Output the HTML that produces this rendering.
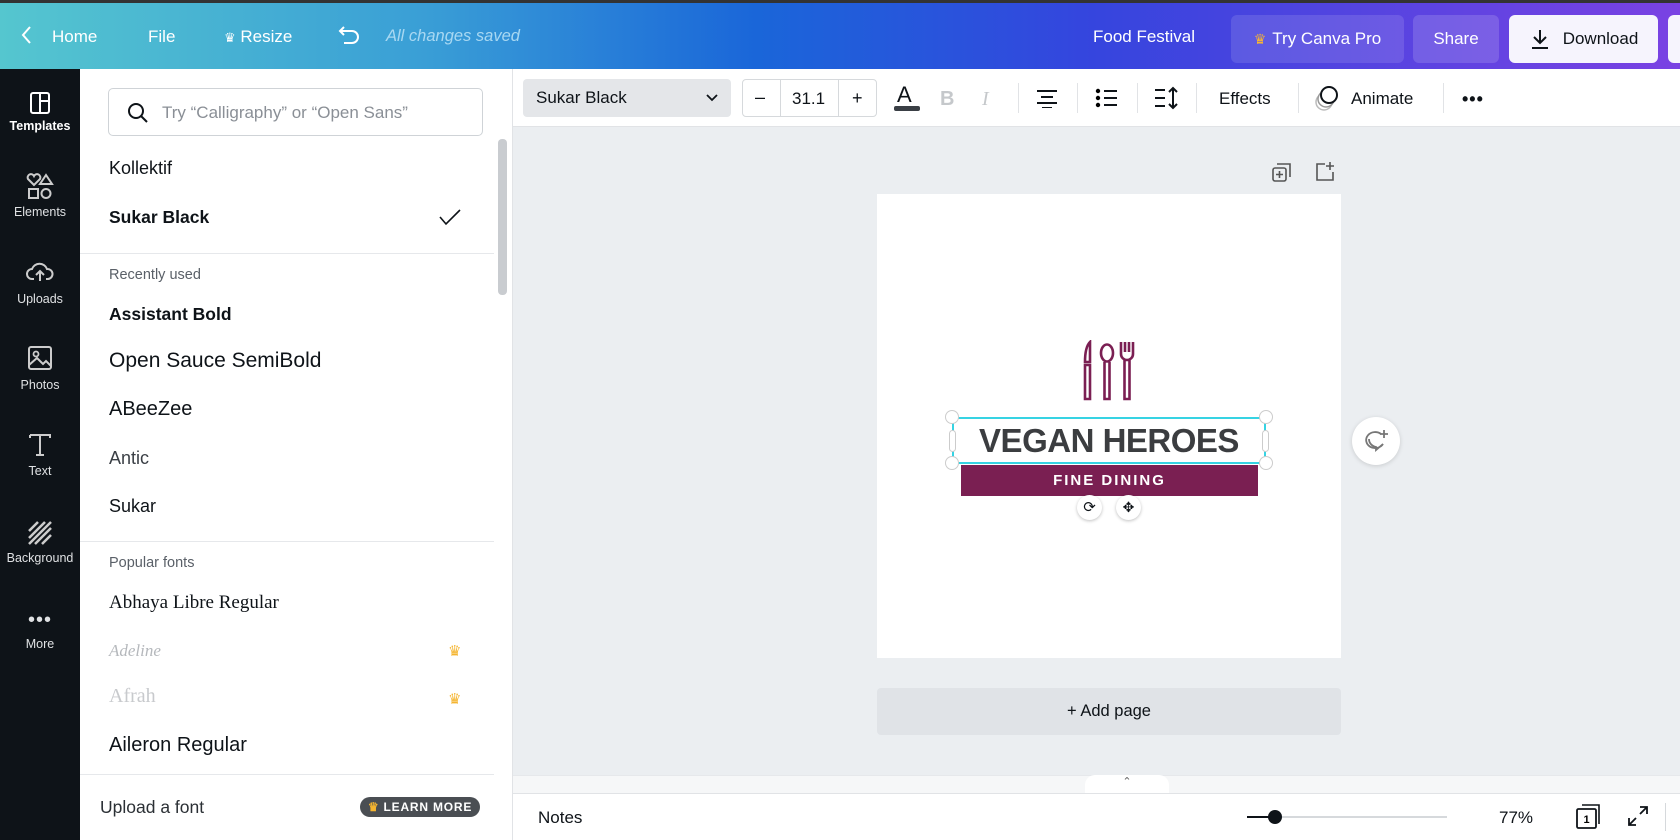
<!DOCTYPE html>
<html><head><meta charset="utf-8"><style>
*{margin:0;padding:0;box-sizing:border-box}
body{width:1680px;height:840px;overflow:hidden;position:relative;font-family:"Liberation Sans",sans-serif;background:#ebeef1;color:#0e1318}
.a{position:absolute}
.hdr{left:0;top:0;width:1680px;height:69px;background:linear-gradient(90deg,#55c6cf 0%,#3a9fd6 25%,#1a66d9 45%,#3545de 65%,#7a42e3 100%);border-top:3px solid #333}
.hdr .t{color:#fff;font-size:17px;top:24px}
.side{left:0;top:69px;width:80px;height:771px;background:#0e1318}
.side .l{width:80px;text-align:center;color:#dfe1e3;font-size:12.5px;left:0}
.side svg{position:absolute;left:26px}
.panel{left:80px;top:69px;width:433px;height:771px;background:#fff;border-right:1px solid #e1e3e6}
.fi{left:109px;font-size:18px;color:#0e1318}
.sep{left:80px;width:414px;height:1px;background:#e6e8eb}
.tb{left:513px;top:69px;width:1167px;height:58px;background:#fff;border-bottom:1px solid #e1e3e6}
.vs{width:1px;height:30px;background:#e1e3e6;top:83px}
.btn{border-radius:6px;height:48px;top:12px;font-size:17px;color:#fff;display:flex;align-items:center;justify-content:center}
</style></head><body>
<div class="a hdr">
 <svg class="a" style="left:20px;top:22px" width="14" height="20"><path d="M10 2 L3 10 L10 18" stroke="#fff" stroke-width="2" fill="none"/></svg>
 <div class="a t" style="left:52px">Home</div>
 <div class="a t" style="left:148px">File</div>
 <div class="a t" style="left:224px"><span style="font-size:13px">♛</span> Resize</div>
 <svg class="a" style="left:338px;top:20px" width="24" height="22"><path d="M6 4 L2 8 L6 12 M2 8 H14 a6 6 0 0 1 0 12 H6" stroke="#fff" stroke-width="2" fill="none"/></svg>
 <div class="a t" style="left:386px;font-style:italic;color:#a8d8f2;font-size:16.5px">All changes saved</div>
 <div class="a t" style="left:1093px">Food Festival</div>
 <div class="a btn" style="left:1231px;width:173px;background:rgba(255,255,255,.12)"><span style="color:#f8b533;font-size:14px;margin-right:6px">♛</span>Try Canva Pro</div>
 <div class="a btn" style="left:1413px;width:86px;background:rgba(255,255,255,.15)">Share</div>
 <div class="a btn" style="left:1509px;width:149px;background:#f6f4fd;color:#0e1318"><svg width="22" height="22" style="margin-right:12px"><path d="M11 2 V15 M5 9 L11 15 L17 9 M3 20 H19" stroke="#0e1318" stroke-width="2" fill="none"/></svg>Download</div>
 <div class="a btn" style="left:1668px;width:20px;background:#f6f4fd"></div>
</div>
<div class="a side">
 <svg style="top:22px" width="28" height="26"><rect x="5" y="2" width="18" height="20" rx="2" stroke="#fff" stroke-width="2" fill="none"/><path d="M14 2V22 M14 10H23" stroke="#fff" stroke-width="2"/></svg>
 <div class="a l" style="top:50px;color:#fff;font-weight:bold">Templates</div>
 <svg style="top:104px" width="28" height="28"><path d="M8 12 L2 6 a3 3 0 0 1 6-3 a3 3 0 0 1 6 3z" stroke="#ccc" stroke-width="2" fill="none"/><path d="M20 2 L26 11 H14z" stroke="#ccc" stroke-width="2" fill="none"/><rect x="3" y="16" width="9" height="9" stroke="#ccc" stroke-width="2" fill="none"/><circle cx="20" cy="20.5" r="4.5" stroke="#ccc" stroke-width="2" fill="none"/></svg>
 <div class="a l" style="top:136px">Elements</div>
 <svg style="top:190px" width="28" height="26"><path d="M8 20 H6 a5 5 0 0 1 0-10 a8 8 0 0 1 15 0 a5 5 0 0 1 1 10 H20 M14 22 V12 M10 16 L14 12 L18 16" stroke="#ccc" stroke-width="2" fill="none"/></svg>
 <div class="a l" style="top:223px">Uploads</div>
 <svg style="top:276px" width="28" height="26"><rect x="3" y="2" width="22" height="22" rx="2" stroke="#ccc" stroke-width="2" fill="none"/><circle cx="10" cy="9" r="2.5" stroke="#ccc" stroke-width="1.8" fill="none"/><path d="M3 20 L11 13 L17 19 L20 16 L25 21" stroke="#ccc" stroke-width="2" fill="none"/></svg>
 <div class="a l" style="top:309px">Photos</div>
 <svg style="top:364px" width="28" height="24"><path d="M4 2 V5 M4 2 H24 V5 M14 2 V22 M10 22 H18" stroke="#ccc" stroke-width="2" fill="none"/></svg>
 <div class="a l" style="top:395px">Text</div>
 <svg style="top:450px" width="28" height="26"><path d="M3 12 L12 3 M3 19 L19 3 M3 25 L25 3 M9 25 L25 9 M16 25 L25 16" stroke="#ccc" stroke-width="2.5"/></svg>
 <div class="a l" style="top:482px">Background</div>
 <div class="a l" style="top:540px;font-size:20px;letter-spacing:1px">•••</div>
 <div class="a l" style="top:568px">More</div>
</div>
<div class="a panel"></div>
<div class="a" style="left:108px;top:88px;width:375px;height:48px;border:1px solid #cfd3d7;border-radius:5px;background:#fff"></div>
<svg class="a" style="left:126px;top:101px" width="24" height="24"><circle cx="10" cy="10" r="7" stroke="#0e1318" stroke-width="2" fill="none"/><path d="M15 15 L21 21" stroke="#0e1318" stroke-width="2"/></svg>
<div class="a" style="left:162px;top:103px;font-size:17px;color:#8a8f96">Try “Calligraphy” or “Open Sans”</div>
<div class="a" style="left:498px;top:139px;width:9px;height:156px;background:#c9ccd0;border-radius:4px"></div>
<div class="a fi" style="top:158px">Kollektif</div>
<div class="a fi" style="top:207px;font-weight:bold;font-size:17.5px">Sukar Black</div>
<svg class="a" style="left:438px;top:207px" width="24" height="20"><path d="M2 10 L8 17 L22 3" stroke="#0e1318" stroke-width="1.6" fill="none"/></svg>
<div class="a sep" style="top:253px"></div>
<div class="a" style="left:109px;top:267px;font-size:14.5px;color:#5a6068">Recently used</div>
<div class="a fi" style="top:304px;font-weight:bold;font-size:17.5px">Assistant Bold</div>
<div class="a fi" style="top:349px;font-size:21px">Open Sauce SemiBold</div>
<div class="a fi" style="top:398px;font-size:20px">ABeeZee</div>
<div class="a fi" style="top:448px;color:#3a3f45">Antic</div>
<div class="a fi" style="top:496px">Sukar</div>
<div class="a sep" style="top:541px"></div>
<div class="a" style="left:109px;top:555px;font-size:14.5px;color:#5a6068">Popular fonts</div>
<div class="a fi" style="top:592px;font-family:'Liberation Serif',serif;font-size:19px">Abhaya Libre Regular</div>
<div class="a fi" style="top:641px;font-family:'Liberation Serif',serif;font-style:italic;font-size:17px;color:#b5b8bc">Adeline</div>
<div class="a fi" style="top:685px;font-family:'Liberation Serif',serif;font-size:20px;color:#c8cacd">Afrah</div>
<div class="a" style="left:448px;top:642px;color:#f5b530;font-size:15px">♛</div>
<div class="a" style="left:448px;top:690px;color:#f5b530;font-size:15px">♛</div>
<div class="a fi" style="top:734px;font-size:20px">Aileron Regular</div>
<div class="a sep" style="top:774px"></div>
<div class="a" style="left:100px;top:797px;font-size:17.5px;color:#2b3035">Upload a font</div>
<div class="a" style="left:360px;top:797px;width:120px;height:20px;background:#4a4e53;border-radius:10px;color:#fff;font-size:12px;font-weight:bold;letter-spacing:.8px;line-height:20px;text-align:center"><span style="color:#f5b530">♛</span> LEARN MORE</div>

<div class="a tb"></div>
<div class="a" style="left:523px;top:79px;width:208px;height:38px;background:#e4e6e9;border-radius:4px;font-size:17px;padding:9px 0 0 13px">Sukar Black</div>
<svg class="a" style="left:705px;top:93px" width="14" height="10"><path d="M2 2 L7 7 L12 2" stroke="#0e1318" stroke-width="1.8" fill="none"/></svg>
<div class="a" style="left:742px;top:79px;width:135px;height:38px;border:1px solid #d6d9dc;border-radius:4px"></div>
<div class="a" style="left:780px;top:79px;width:1px;height:38px;background:#d6d9dc"></div>
<div class="a" style="left:838px;top:79px;width:1px;height:38px;background:#d6d9dc"></div>
<div class="a" style="left:755px;top:87px;font-size:18px">–</div>
<div class="a" style="left:792px;top:89px;font-size:17px">31.1</div>
<div class="a" style="left:852px;top:88px;font-size:18px">+</div>
<div class="a" style="left:897px;top:82px;font-size:22px">A</div>
<div class="a" style="left:894px;top:106px;width:26px;height:5px;background:#3a3f45;border-radius:2px"></div>
<div class="a" style="left:940px;top:88px;font-size:20px;font-weight:bold;color:#c5c8cb">B</div>
<div class="a" style="left:982px;top:88px;font-size:20px;font-style:italic;color:#c5c8cb;font-family:'Liberation Serif',serif">I</div>
<div class="a vs" style="left:1018px"></div>
<svg class="a" style="left:1035px;top:88px" width="24" height="20"><path d="M2 3H22 M6 9H18 M2 15H22 M7 20H17" stroke="#0e1318" stroke-width="2"/></svg>
<div class="a vs" style="left:1077px"></div>
<svg class="a" style="left:1095px;top:87px" width="24" height="22"><circle cx="3" cy="4" r="2.2"/><circle cx="3" cy="11" r="2.2"/><circle cx="3" cy="18" r="2.2"/><path d="M9 4H22 M9 11H22 M9 18H22" stroke="#0e1318" stroke-width="2"/></svg>
<div class="a vs" style="left:1137px"></div>
<svg class="a" style="left:1153px;top:86px" width="26" height="24"><path d="M2 4H12 M2 12H12 M2 20H12 M20 2V22 M16 6L20 2L24 6 M16 18L20 22L24 18" stroke="#0e1318" stroke-width="2" fill="none"/></svg>
<div class="a vs" style="left:1196px"></div>
<div class="a" style="left:1219px;top:89px;font-size:17px">Effects</div>
<div class="a vs" style="left:1298px"></div>
<svg class="a" style="left:1313px;top:84px" width="30" height="30"><circle cx="11" cy="18" r="8" stroke="#bbb" stroke-width="1.5" fill="#fff"/><circle cx="13" cy="15" r="8" stroke="#999" stroke-width="1.5" fill="#fff"/><circle cx="16" cy="11" r="8" stroke="#0e1318" stroke-width="2" fill="#fff"/></svg>
<div class="a" style="left:1351px;top:89px;font-size:17px">Animate</div>
<div class="a vs" style="left:1443px"></div>
<div class="a" style="left:1462px;top:89px;font-size:18px;font-weight:bold;letter-spacing:1px">•••</div>

<svg class="a" style="left:1271px;top:162px" width="22" height="22"><rect x="2" y="6" width="13" height="13" rx="2" stroke="#555" stroke-width="1.6" fill="none"/><path d="M6 2H19V15" stroke="#555" stroke-width="1.6" fill="none"/><path d="M8.5 9V16 M5 12.5H12" stroke="#555" stroke-width="1.6"/></svg>
<svg class="a" style="left:1313px;top:160px" width="22" height="22"><path d="M12 4H4V20H20V12 M17 2V10 M13 6H21" stroke="#555" stroke-width="1.6" fill="none"/></svg>
<div class="a" style="left:877px;top:194px;width:464px;height:464px;background:#fff"></div>
<svg class="a" style="left:1082px;top:340px" width="56" height="62" fill="none" stroke="#7b1f53" stroke-width="2.6"><path d="M8 2 C4 6 3 14 3 22 H8 V2z M3 25 H8 V59 H3z"/><ellipse cx="25" cy="13" rx="6" ry="8.5"/><path d="M22.5 22 V59 H27.5 V22"/><path d="M39 2 V14 a6 6 0 0 0 12 0 V2 M43 2 V12 M47 2 V12 M42.5 20 V59 H47.5 V20"/></svg>
<div class="a" style="left:952px;top:417px;width:314px;height:47px;border:2px solid #36d3e3"></div>
<div class="a" style="left:952px;top:417px;width:314px;text-align:center;font-size:33px;font-weight:bold;color:#3b3d40;line-height:40px;padding-top:4px;letter-spacing:-.5px">VEGAN HEROES</div>
<div class="a" style="left:961px;top:465px;width:297px;height:31px;background:#7a1f52;color:#fff;font-weight:bold;font-size:15px;letter-spacing:2px;text-align:center;line-height:31px">FINE DINING</div>
<div class="a" style="left:945px;top:410px;width:14px;height:14px;border-radius:50%;background:#fff;border:1px solid #ccc"></div>
<div class="a" style="left:1259px;top:410px;width:14px;height:14px;border-radius:50%;background:#fff;border:1px solid #ccc"></div>
<div class="a" style="left:945px;top:456px;width:14px;height:14px;border-radius:50%;background:#fff;border:1px solid #ccc"></div>
<div class="a" style="left:1259px;top:456px;width:14px;height:14px;border-radius:50%;background:#fff;border:1px solid #ccc"></div>
<div class="a" style="left:949px;top:430px;width:7px;height:22px;border-radius:4px;background:#fff;border:1px solid #ccc"></div>
<div class="a" style="left:1262px;top:430px;width:7px;height:22px;border-radius:4px;background:#fff;border:1px solid #ccc"></div>
<div class="a" style="left:1077px;top:495px;width:25px;height:25px;border-radius:50%;background:#fff;box-shadow:0 1px 3px rgba(0,0,0,.25);text-align:center;font-size:15px;line-height:25px">⟳</div>
<div class="a" style="left:1116px;top:495px;width:25px;height:25px;border-radius:50%;background:#fff;box-shadow:0 1px 3px rgba(0,0,0,.25);text-align:center;font-size:14px;line-height:25px">✥</div>
<div class="a" style="left:1352px;top:417px;width:48px;height:48px;border-radius:50%;background:#fff;box-shadow:0 1px 5px rgba(0,0,0,.15)"></div>
<svg class="a" style="left:1363px;top:428px" width="28" height="26"><path d="M18 6 a9 8 0 1 0 2 10 L13 22 L13 19 a9 8 0 0 1-7-8" stroke="#777" stroke-width="1.8" fill="none"/><path d="M21 2V10 M17 6H25" stroke="#777" stroke-width="1.8"/></svg>
<div class="a" style="left:877px;top:688px;width:464px;height:47px;background:#e0e3e7;border-radius:4px;text-align:center;line-height:47px;font-size:16.5px">+ Add page</div>

<div class="a" style="left:513px;top:775px;width:1167px;height:18px;background:#f6f7f8;border-top:1px solid #e6e8eb"></div>
<div class="a" style="left:1085px;top:775px;width:84px;height:18px;background:#fff;border-radius:10px 10px 0 0;text-align:center;font-size:11px;color:#666">⌃</div>
<div class="a" style="left:513px;top:793px;width:1167px;height:47px;background:#fff;border-top:1px solid #e1e3e6"></div>
<div class="a" style="left:538px;top:808px;font-size:17px">Notes</div>
<div class="a" style="left:1247px;top:816px;width:25px;height:2px;background:#0e1318"></div>
<div class="a" style="left:1272px;top:816px;width:175px;height:2px;background:#d6d9dc"></div>
<div class="a" style="left:1268px;top:810px;width:14px;height:14px;border-radius:50%;background:#0e1318"></div>
<div class="a" style="left:1499px;top:808px;font-size:17px">77%</div>
<svg class="a" style="left:1574px;top:802px" width="28" height="28"><path d="M8 3H25V22" stroke="#0e1318" stroke-width="1.6" fill="none"/><rect x="3" y="7" width="19" height="19" rx="1.5" stroke="#0e1318" stroke-width="1.8" fill="#fff"/><text x="12.5" y="21" font-size="11" font-weight="bold" text-anchor="middle" font-family="Liberation Sans">1</text></svg>
<svg class="a" style="left:1626px;top:804px" width="24" height="24"><path d="M14 3H21V10 M21 3L14 10 M3 14V21H10 M3 21L10 14" stroke="#0e1318" stroke-width="1.8" fill="none"/></svg>
<div class="a" style="left:1665px;top:803px;width:1px;height:28px;background:#d6d9dc"></div>
</body></html>
